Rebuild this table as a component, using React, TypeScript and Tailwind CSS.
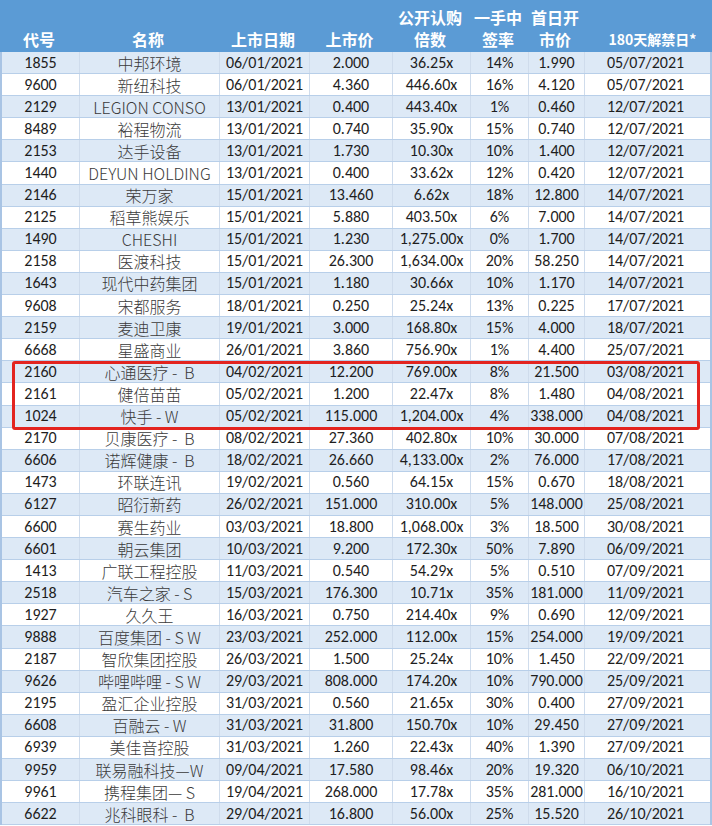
import React from 'react';

const rows: string[][] = [
  ['1855', '中邦环境', '06/01/2021', '2.000', '36.25x', '14%', '1.990', '05/07/2021'],
  ['9600', '新纽科技', '06/01/2021', '4.360', '446.60x', '16%', '4.120', '05/07/2021'],
  ['2129', 'LEGION CONSO', '13/01/2021', '0.400', '443.40x', '1%', '0.460', '12/07/2021'],
  ['8489', '裕程物流', '13/01/2021', '0.740', '35.90x', '15%', '0.740', '12/07/2021'],
  ['2153', '达手设备', '13/01/2021', '1.730', '10.30x', '10%', '1.400', '12/07/2021'],
  ['1440', 'DEYUN HOLDING', '13/01/2021', '0.400', '33.62x', '12%', '0.420', '12/07/2021'],
  ['2146', '荣万家', '15/01/2021', '13.460', '6.62x', '18%', '12.800', '14/07/2021'],
  ['2125', '稻草熊娱乐', '15/01/2021', '5.880', '403.50x', '6%', '7.000', '14/07/2021'],
  ['1490', 'CHESHI', '15/01/2021', '1.230', '1,275.00x', '0%', '1.700', '14/07/2021'],
  ['2158', '医渡科技', '15/01/2021', '26.300', '1,634.00x', '20%', '58.250', '14/07/2021'],
  ['1643', '现代中药集团', '15/01/2021', '1.180', '30.66x', '10%', '1.170', '14/07/2021'],
  ['9608', '宋都服务', '18/01/2021', '0.250', '25.24x', '13%', '0.225', '17/07/2021'],
  ['2159', '麦迪卫康', '19/01/2021', '3.000', '168.80x', '15%', '4.000', '18/07/2021'],
  ['6668', '星盛商业', '26/01/2021', '3.860', '756.90x', '1%', '4.400', '25/07/2021'],
  ['2160', '心通医疗 -  B', '04/02/2021', '12.200', '769.00x', '8%', '21.500', '03/08/2021'],
  ['2161', '健倍苗苗', '05/02/2021', '1.200', '22.47x', '8%', '1.480', '04/08/2021'],
  ['1024', '快手 - W', '05/02/2021', '115.000', '1,204.00x', '4%', '338.000', '04/08/2021'],
  ['2170', '贝康医疗 -  B', '08/02/2021', '27.360', '402.80x', '10%', '30.000', '07/08/2021'],
  ['6606', '诺辉健康 -  B', '18/02/2021', '26.660', '4,133.00x', '2%', '76.000', '17/08/2021'],
  ['1473', '环联连讯', '19/02/2021', '0.560', '64.15x', '15%', '0.670', '18/08/2021'],
  ['6127', '昭衍新药', '26/02/2021', '151.000', '310.00x', '5%', '148.000', '25/08/2021'],
  ['6600', '赛生药业', '03/03/2021', '18.800', '1,068.00x', '3%', '18.500', '30/08/2021'],
  ['6601', '朝云集团', '10/03/2021', '9.200', '172.30x', '50%', '7.890', '06/09/2021'],
  ['1413', '广联工程控股', '11/03/2021', '0.540', '54.29x', '5%', '0.510', '07/09/2021'],
  ['2518', '汽车之家 - S', '15/03/2021', '176.300', '10.71x', '35%', '181.000', '11/09/2021'],
  ['1927', '久久王', '16/03/2021', '0.750', '214.40x', '9%', '0.690', '12/09/2021'],
  ['9888', '百度集团 - S W', '23/03/2021', '252.000', '112.00x', '15%', '254.000', '19/09/2021'],
  ['2187', '智欣集团控股', '26/03/2021', '1.500', '25.24x', '10%', '1.450', '22/09/2021'],
  ['9626', '哔哩哔哩 - S W', '29/03/2021', '808.000', '174.20x', '10%', '790.000', '25/09/2021'],
  ['2195', '盈汇企业控股', '31/03/2021', '0.560', '21.65x', '30%', '0.400', '27/09/2021'],
  ['6608', '百融云 - W', '31/03/2021', '31.800', '150.70x', '10%', '29.450', '27/09/2021'],
  ['6939', '美佳音控股', '31/03/2021', '1.260', '22.43x', '40%', '1.390', '27/09/2021'],
  ['9959', '联易融科技—W', '09/04/2021', '17.580', '98.46x', '20%', '19.320', '06/10/2021'],
  ['9961', '携程集团— S', '19/04/2021', '268.000', '17.78x', '35%', '281.000', '16/10/2021'],
  ['6622', '兆科眼科 -  B', '29/04/2021', '16.800', '56.00x', '25%', '15.520', '26/10/2021'],
];

const cols = 'grid grid-cols-[78px_140px_90px_83px_78px_58px_56px_129px]';
const numFont = { fontFamily: 'Carlito, "Liberation Sans", sans-serif' };
const cjkFont = { fontFamily: '"Noto Sans CJK SC", sans-serif' };

function HeadCell({ top, bottom, small }: { top?: string; bottom: string; small?: boolean }) {
  return (
    <div className="flex flex-col justify-end items-center h-[52px] pb-[2px] text-white font-semibold leading-[22px]" style={cjkFont}>
      {top && <div className="text-[16px]">{top}</div>}
      <div className={small ? 'text-[14px] pl-[10px]' : 'text-[16px]'}>{bottom}</div>
    </div>
  );
}

export default function App() {
  return (
    <div className="w-[712px] h-[826px] bg-white overflow-hidden">
      <div className="relative">
        <div className={`${cols} bg-[#5b9bd5]`}>
          <HeadCell bottom="代号" />
          <HeadCell bottom="名称" />
          <HeadCell bottom="上市日期" />
          <HeadCell bottom="上市价" />
          <HeadCell top="公开认购" bottom="倍数" />
          <HeadCell top="一手中" bottom="签率" />
          <HeadCell top="首日开" bottom="市价" />
          <HeadCell bottom="180天解禁日*" small />
        </div>
        <div className="border-l-2 border-r-2 border-[#a9c4e4]">
          {rows.map((r, i) => (
            <div
              key={r[0] + i}
              className={`${cols} h-[22.1px] border-b border-[#b8cfe9] ${i % 2 === 0 ? 'bg-[#dde9f6]' : 'bg-white'}`}
            >
              {r.map((c, j) => (
                <div
                  key={j}
                  className={`flex items-center justify-center border-r border-[#cfdcec] last:border-r-0 ${
                    j === 1 ? 'text-[16px] text-[#3a3a3a] font-light' : 'text-[16px] text-[#1e1e1e]'
                  } ${j === 7 ? 'pr-[8px]' : ''}`}
                  style={j === 1 ? cjkFont : numFont}
                >
                  <span className="leading-none whitespace-pre">{c}</span>
                </div>
              ))}
            </div>
          ))}
        </div>
        <div className="absolute left-[12px] top-[361px] w-[688px] h-[69px] border-[3px] border-[#e3241f] rounded-[3px]" />
      </div>
    </div>
  );
}
